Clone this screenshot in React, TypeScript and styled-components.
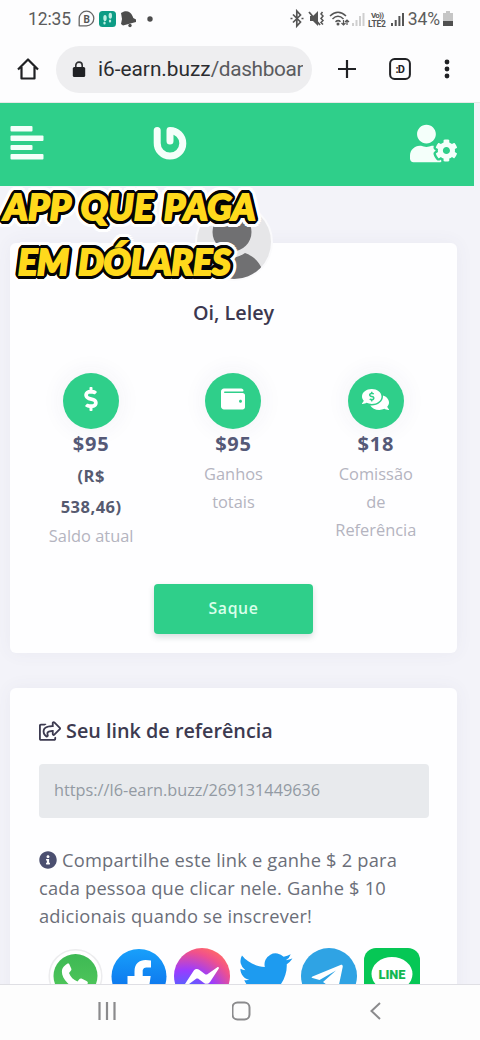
import React from 'react';
import styled, { createGlobalStyle } from 'styled-components';
import { FaCommentsDollar, FaDollarSign, FaInfoCircle, FaRegShareSquare, FaUserCog, FaWallet } from 'react-icons/fa';

const Global = createGlobalStyle`
  * { box-sizing: border-box; }
  body { margin: 0; background: #fff; }
`;

const Phone = styled.div`
  position: relative;
  display: flex;
  flex-direction: column;
  width: 480px;
  height: 1040px;
  overflow: hidden;
  background: #fdfdfe;
  font-family: 'Open Sans', sans-serif;
`;

const StatusBar = styled.div`
  display: flex;
  align-items: center;
  justify-content: space-between;
  height: 36px;
  padding: 1px 27px 0 28px;
  font: 400 17.5px Roboto, sans-serif;
  color: #5c5c5c;
`;

const StatusGroup = styled.div<{ $gap: number }>`
  display: flex;
  align-items: center;
  gap: ${p => p.$gap}px;
`;

const Clock = styled.span`
  letter-spacing: -0.1px;
`;

const Battery = styled.span`
  margin-left: 1px;
  letter-spacing: -0.1px;
`;

const BrowserBar = styled.div`
  display: flex;
  align-items: center;
  height: 67px;
  padding: 0 28px 0 17px;
  border-bottom: 1px solid #e8e8e8;
`;

const AddressPill = styled.div`
  display: flex;
  align-items: center;
  width: 256px;
  height: 47px;
  margin: 0 24px 0 17px;
  padding: 0 9px 0 16px;
  border-radius: 24px;
  background: #eeeef0;
`;

const Address = styled.div`
  flex: 1;
  margin-left: 12px;
  overflow: hidden;
  white-space: nowrap;
  font: 400 20.8px/30px Roboto, sans-serif;
  letter-spacing: -0.35px;
  color: #5a5b5e;
`;

const Host = styled.span`
  letter-spacing: 0;
  color: #2b2c2f;
`;

const BrowserActions = styled.div`
  display: flex;
  flex: 1;
  align-items: center;
  justify-content: space-between;
`;

const Page = styled.main`
  flex: 1;
  min-height: 0;
  overflow: hidden;
  background: #f3f3f9;
`;

const Header = styled.header`
  display: flex;
  align-items: center;
  justify-content: space-between;
  width: 474px;
  height: 83px;
  padding: 0 17px 3px 10px;
  background: #2fcf8a;
`;

const HeaderLogo = styled.div`
  display: flex;
  flex: 1;
  padding-left: 109px;
`;

const Card = styled.section<{ $top: number; $height: number }>`
  display: flex;
  flex-direction: column;
  width: 447px;
  height: ${p => p.$height}px;
  margin: ${p => p.$top}px 0 0 10px;
  border-radius: 6px;
  background: #fefeff;
  box-shadow: 0 0 18px rgba(90, 80, 120, 0.06);
`;

const Avatar = styled.div`
  display: flex;
  align-self: center;
  flex: none;
  width: 78px;
  height: 78px;
  margin-top: -40px;
`;

const Greeting = styled.h1`
  margin: 18px 0 0;
  text-align: center;
  font-size: 19.8px;
  font-weight: 600;
  line-height: 28px;
  color: #3c384f;
`;

const Stats = styled.div`
  display: flex;
  height: 211px;
  margin: 46px 10px 0;
`;

const Stat = styled.div`
  display: flex;
  flex: 1;
  flex-direction: column;
  align-items: center;
  text-align: center;
`;

const StatIcon = styled.div`
  display: flex;
  align-items: center;
  justify-content: center;
  width: 56px;
  height: 56px;
  padding-bottom: 4px;
  border-radius: 50%;
  background: #2fcf8a;
  box-shadow: 0 0 24px rgba(60, 60, 120, 0.07);
  color: #fff;
`;

const Value = styled.strong`
  height: 31px;
  font-size: 20px;
  font-weight: 700;
  line-height: 30px;
  letter-spacing: 0.8px;
  color: #555977;
`;

const Converted = styled.strong`
  width: 70px;
  font-size: 16.5px;
  font-weight: 700;
  line-height: 31px;
  letter-spacing: 0.5px;
  color: #565a70;
`;

const Label = styled.span`
  width: 94px;
  font-size: 16.4px;
  line-height: 28px;
  color: #b4b4c0;
`;

const Withdraw = styled.button`
  align-self: center;
  width: 159px;
  height: 50px;
  border: 0;
  padding: 0 0 2px;
  border-radius: 4px;
  background: #2fcf8a;
  box-shadow: 0 3px 6px rgba(40, 80, 70, 0.18);
  font: 600 15.8px 'Open Sans', sans-serif;
  letter-spacing: 0.6px;
  color: #d9ffea;
`;

const Referral = styled.div`
  display: flex;
  flex-direction: column;
  padding: 29px 28px 0 29px;
`;

const ReferralTitle = styled.h2`
  display: flex;
  align-items: center;
  gap: 5px;
  margin: 0;
  font-size: 19.8px;
  font-weight: 600;
  line-height: 28px;
  white-space: nowrap;
  color: #3c3a50;
`;

const LinkField = styled.div`
  height: 54px;
  margin-top: 19px;
  padding: 0 15px;
  border-radius: 4px;
  background: #e8eaed;
  font-size: 16.3px;
  line-height: 53px;
  color: #939aa3;
`;

const Notice = styled.p`
  margin: 28px 0 0;
  font-size: 18.3px;
  line-height: 28px;
  letter-spacing: 0.2px;
  white-space: nowrap;
  color: #6b6e79;
`;

const InfoMark = styled(FaInfoCircle)`
  margin-right: 5px;
  vertical-align: -2px;
  color: #4b4f70;
`;

const Socials = styled.div`
  display: flex;
  gap: 7.2px;
  margin: 18px 0 0 9px;
`;

const NavBar = styled.nav`
  display: flex;
  align-items: center;
  justify-content: space-between;
  height: 56px;
  padding: 0 98px 3px;
  border-top: 1px solid #dfdfe4;
  background: #fdfdfd;
`;

const Caption = styled.div`
  position: absolute;
  top: 181px;
  left: 0;
  width: 262px;
`;

const ring = (radius: number, color: string) =>
  Array.from({ length: 20 }, (_, i) => {
    const a = (i / 20) * Math.PI * 2;
    return `${(Math.cos(a) * radius).toFixed(2)}px ${(Math.sin(a) * radius).toFixed(2)}px 0 ${color}`;
  }).join(', ');

const CaptionLine = styled.div<{ $indent: number; $spacing: number }>`
  height: 55px;
  margin-left: ${p => p.$indent}px;
  white-space: nowrap;
  font: italic 900 36px/50px Lato, sans-serif;
  letter-spacing: ${p => p.$spacing}px;
  word-spacing: 2px;
  color: #ffd91c;
  -webkit-text-stroke: 2px #ffd91c;
  stroke-linejoin: round;
  text-shadow: ${ring(2, '#050505')}, ${ring(3.8, '#050505')}, ${ring(7, '#fff')};
`;

const StatusIcons = () => (
  <svg width="99" height="20" viewBox="0 0 99 20" fill="none" stroke="#555" strokeWidth="1.500">
    <path d="M4 5.500l7.500 7.500-3.700 4V2l3.700 4L4 13.500M1.500 9.500h2M12.500 9.500h2" strokeWidth="1.700" />
    <path d="M21 7h3l5-5v15l-5-5h-3z" fill="#555" stroke="none" />
    <path d="M20 3l11 13" strokeWidth="1.800" />
    <path d="M33.500 3l-1.500 2 2 2-2 2.500 2 2-2 2 2 2" />
    <path d="M41 7c5-5 11-5 16 0M43.500 10c3.500-3.500 7.500-3.500 11 0M46.500 12.800c2-1.600 3.500-1.600 5 0" />
    <circle cx="49" cy="15" r="1.500" fill="#555" stroke="none" />
    <path d="M54.500 11v5m-2-2l2 2 2-2M58 16v-5m-2 2l2-2 2 2" strokeWidth="1.200" />
    <path d="M64 17v-3M67.500 17v-6M71 17V7M74.500 17V4" stroke="#cfcfcf" strokeWidth="2" />
    <text x="82" y="8.500" fontFamily="Roboto, sans-serif" fontWeight="700" fontSize="8" fill="#555" stroke="none" textLength="13">Vo))</text>
    <text x="79" y="17.500" fontFamily="Roboto, sans-serif" fontWeight="700" fontSize="8.500" fill="#555" stroke="none" textLength="18">LTE2</text>
  </svg>
);

const Signal = () => (
  <svg width="13" height="16" viewBox="0 0 13 16" stroke="#555" strokeWidth="2">
    <path d="M1 15v-3M4.700 15V9M8.400 15V5M12 15V2" />
  </svg>
);

const BatteryIcon = () => (
  <svg width="10" height="15" viewBox="0 0 10 15">
    <path d="M3 0h4v2h3v13H0V2h3z" fill="#c6c6c6" />
    <path d="M0 10h10v5H0z" fill="#505050" />
  </svg>
);

const Notifications = () => (
  <svg width="76" height="18" viewBox="0 0 76 18">
    <path d="M1.200 16.300V8.500a7.300 7.300 0 1 1 7.300 7.300H1.200z" fill="none" stroke="#666" strokeWidth="1.300" />
    <text x="5.400" y="12.500" fontFamily="Roboto, sans-serif" fontWeight="700" fontSize="10" fill="#555">B</text>
    <rect x="21" y="1" width="17" height="16" rx="3.500" fill="#0d9c85" />
    <g fill="#bdeee2">
      <ellipse cx="27" cy="8" rx="1.700" ry="3.100" />
      <ellipse cx="26.500" cy="13" rx="1.200" ry="1.500" />
      <ellipse cx="32.300" cy="5.800" rx="1.700" ry="3" />
      <ellipse cx="32" cy="11" rx="1.200" ry="1.500" />
    </g>
    <g fill="#4d4d4d">
      <path d="M43 3l3-1.500c3.500-1 7 .5 8.500 4.500l.8 2 2.700 1.500v2.500l-13 3.500-2-1.500 1-5z" />
      <circle cx="52" cy="15.500" r="1.700" />
      <circle cx="72" cy="9" r="2.700" />
    </g>
  </svg>
);

const AppLogo = () => (
  <svg width="34" height="34" viewBox="0 0 34 34" fill="none" stroke="#f4fffa" strokeWidth="7" strokeLinecap="round" strokeLinejoin="round">
    <path d="M4.200 4.500V17a12.800 12.800 0 1 0 12.800-12.500V15" />
  </svg>
);

const MenuIcon = () => (
  <svg width="34" height="34" viewBox="0 0 34 34" fill="#f4fffa">
    <rect x="0.500" y="0" width="22" height="5.500" rx="1" />
    <rect x="0.500" y="9.500" width="33" height="5.500" rx="1" />
    <rect x="0.500" y="19" width="22" height="5" rx="1" />
    <rect x="0.500" y="28" width="33" height="5.500" rx="1" />
  </svg>
);

const WhatsApp = () => (
  <svg width="56" height="56" viewBox="0 0 56 56">
    <defs>
      <linearGradient id="wa" x2="0" y2="1"><stop stopColor="#3db954" /><stop offset="1" stopColor="#54c95c" /></linearGradient>
    </defs>
    <circle cx="27.500" cy="28" r="26.300" fill="#fff" stroke="#ececee" strokeWidth="1.500" />
    <circle cx="27.500" cy="28" r="22" fill="url(#wa)" />
    <path d="M18.500 17c-6 4-4 12 2 18 7 7 17 9 20 1 .5-2 .5-2-1-3l-5-2.500c-1-.3-1.500 0-2 .5l-2 2.500c-4-1.500-7-4.500-8.500-8.500l2-2.500c.5-.7.500-1 .2-2l-2-4.500c-.6-1-2.500-.3-3.700 1z" transform="translate(-1 0)" fill="#fff" />
  </svg>
);

const Facebook = () => (
  <svg width="56" height="56" viewBox="0 0 56 56">
    <defs>
      <linearGradient id="fb" x2="0" y2="1"><stop stopColor="#18a0fb" /><stop offset="1" stopColor="#0866e8" /></linearGradient>
    </defs>
    <circle cx="28" cy="28.500" r="27.500" fill="url(#fb)" />
    <path d="M24 56V36h-7v-8h7v-4.500c0-8 5-11.500 11-11.500l5.500.6v7h-3.700c-3.500 0-4.600 1.500-4.600 4V28h8l-1.200 8h-6.800v20z" transform="translate(-.5 0)" fill="#fff" />
  </svg>
);

const Messenger = () => (
  <svg width="56" height="56" viewBox="0 0 56 56">
    <defs>
      <radialGradient id="ms" cx="0.200" cy="1" r="1.100">
        <stop stopColor="#0a8cff" /><stop offset="0.550" stopColor="#9a3cff" /><stop offset="0.850" stopColor="#f0518c" /><stop offset="1" stopColor="#ff6a68" />
      </radialGradient>
    </defs>
    <circle cx="28" cy="28" r="28" fill="url(#ms)" />
    <path d="M11 36l8.500-13c1.500-2.300 4-2.500 6-1l6 4.500 1.500 0 10-7c1.500-1 2.500 0 1.500 1.500L36 34c-1.500 2-4 2.500-6 1l-6-4.500h-1.500L13 37.500c-1.500 1-2.800 0-2-1.500z" fill="#fff" />
  </svg>
);

const Twitter = () => (
  <svg width="56" height="56" viewBox="0 0 56 56">
    <path transform="translate(.3 .3) scale(2.250)" d="M23.950 4.570a10 10 0 0 1-2.820.77 4.960 4.960 0 0 0 2.160-2.720c-.95.55-2 .95-3.130 1.180a4.920 4.920 0 0 0-8.380 4.480C7.690 8.090 4.070 6.130 1.640 3.160a4.920 4.920 0 0 0 1.520 6.570 4.900 4.900 0 0 1-2.230-.61v.06c0 2.380 1.700 4.370 3.950 4.820a5 5 0 0 1-2.210.09 4.940 4.940 0 0 0 4.600 3.420A9.870 9.870 0 0 1 0 19.540a13.990 13.990 0 0 0 7.550 2.210c9.050 0 14-7.500 14-13.980 0-.21 0-.42-.02-.63a9.940 9.940 0 0 0 2.460-2.550z" fill="#1d9bf0" />
  </svg>
);

const Telegram = () => (
  <svg width="56" height="56" viewBox="0 0 56 56">
    <circle cx="28" cy="28" r="28" fill="#2fa3e4" />
    <path d="M11.500 28.500L39.500 17c1.600-.5 2.500.3 2.200 2L37 41.500c-.4 1.600-1.400 2-2.800 1.200L22 34l13-11.500L18.500 32l-7-2c-1.200-.4-1.200-1 0-1.500z" fill="#fff" />
  </svg>
);

const Line = () => (
  <svg width="56" height="56" viewBox="0 0 56 56">
    <rect width="56" height="56" rx="12" fill="#06c755" />
    <ellipse cx="28" cy="26" rx="20.500" ry="17" fill="#fff" />
    <text x="14.500" y="30.500" fontFamily="Roboto, sans-serif" fontSize="13" fontWeight="900" textLength="27" lengthAdjust="spacingAndGlyphs" fill="#13b851">LINE</text>
  </svg>
);

export default function App() {
  return (
    <Phone>
      <Global />
      <StatusBar>
        <StatusGroup $gap={7}>
          <Clock>12:35</Clock>
          <Notifications />
        </StatusGroup>
        <StatusGroup $gap={3}>
          <StatusIcons />
          <Signal />
          <Battery>34%</Battery>
          <BatteryIcon />
        </StatusGroup>
      </StatusBar>
      <BrowserBar>
        <svg width="22" height="22" viewBox="0 0 22 22" fill="none" stroke="#202124" strokeWidth="2.200" strokeLinejoin="round">
          <path d="M1 11.500L11 1.500l10 10M4.500 9v11.500h13V9" />
        </svg>
        <AddressPill>
          <svg width="14" height="17" viewBox="0 0 14 17">
            <path d="M3.800 7V4.300a3.200 3.200 0 0 1 6.400 0V7" fill="none" stroke="#303134" strokeWidth="1.600" />
            <rect x="0.800" y="6" width="12.400" height="10" rx="1.500" fill="#202124" />
          </svg>
          <Address><Host>i6-earn.buzz</Host>/dashboar</Address>
        </AddressPill>
        <BrowserActions>
          <svg width="22" height="20" viewBox="0 0 22 20" stroke="#202124" strokeWidth="2.200">
            <path d="M2 10h18M11 1v18" />
          </svg>
          <svg width="22" height="22" viewBox="0 0 22 22">
            <rect x="1.100" y="1.100" width="19.800" height="19.800" rx="4.500" fill="none" stroke="#202124" strokeWidth="2" />
            <text x="6.500" y="14.800" fontFamily="Roboto, sans-serif" fontSize="11" fontWeight="700" fill="#202124" textLength="9.500">:D</text>
          </svg>
          <svg width="10" height="20" viewBox="0 0 10 20" fill="#202124">
            <circle cx="5" cy="3" r="2.400" /><circle cx="5" cy="10" r="2.400" /><circle cx="5" cy="17" r="2.400" />
          </svg>
        </BrowserActions>
      </BrowserBar>

      <Page>
        <Header>
          <MenuIcon />
          <HeaderLogo><AppLogo /></HeaderLogo>
          <FaUserCog size={47} color="#f4fffa" />
        </Header>

        <Card $top={57} $height={410}>
          <Avatar>
            <svg width="78" height="78" viewBox="0 0 78 78">
              <clipPath id="face"><circle cx="39" cy="39" r="37" /></clipPath>
              <circle cx="39" cy="39" r="39" fill="#fafafc" />
              <circle cx="39" cy="39" r="37" fill="#e6e6e8" />
              <g clipPath="url(#face)" fill="#707072">
                <circle cx="37" cy="29" r="19.500" />
                <path d="M5 70c3-11 10-17 16-19 9 6 20 5 29-1 8 3 14 8 18 18v10H5z" />
              </g>
            </svg>
          </Avatar>
          <Greeting>Oi, Leley</Greeting>
          <Stats>
            <Stat>
              <StatIcon><FaDollarSign size={24} /></StatIcon>
              <Value>$95</Value>
              <Converted>(R$ 538,46)</Converted>
              <Label>Saldo atual</Label>
            </Stat>
            <Stat>
              <StatIcon><FaWallet size={24} /></StatIcon>
              <Value>$95</Value>
              <Label>Ganhos<br />totais</Label>
            </Stat>
            <Stat>
              <StatIcon><FaCommentsDollar size={27} /></StatIcon>
              <Value>$18</Value>
              <Label>Comissão<br />de<br />Referência</Label>
            </Stat>
          </Stats>
          <Withdraw>Saque</Withdraw>
        </Card>

        <Card $top={35} $height={420}>
          <Referral>
            <ReferralTitle><FaRegShareSquare size={22} />Seu link de referência</ReferralTitle>
            <LinkField>https://l6-earn.buzz/269131449636</LinkField>
            <Notice>
              <InfoMark size={18} />Compartilhe este link e ganhe $ 2 para<br />
              cada pessoa que clicar nele. Ganhe $ 10<br />
              adicionais quando se inscrever!
            </Notice>
            <Socials>
              <WhatsApp /><Facebook /><Messenger /><Twitter /><Telegram /><Line />
            </Socials>
          </Referral>
        </Card>
      </Page>

      <NavBar>
        <svg width="18" height="18" viewBox="0 0 18 18" stroke="#8b8b8d" strokeWidth="2.200"><path d="M1.500 0v18M9 0v18M16.500 0v18" /></svg>
        <svg width="20" height="20" viewBox="0 0 20 20"><rect x="0.500" y="1.500" width="17" height="17" rx="5" fill="none" stroke="#8b8b8d" strokeWidth="2" /></svg>
        <svg width="14" height="18" viewBox="0 0 14 18" fill="none" stroke="#8b8b8d" strokeWidth="2"><path d="M12 1L3.500 9l8.500 8" /></svg>
      </NavBar>

      <Caption>
        <CaptionLine $indent={4} $spacing={0.5}>APP QUE PAGA</CaptionLine>
        <CaptionLine $indent={18} $spacing={-0.2}>EM DÓLARES</CaptionLine>
      </Caption>
    </Phone>
  );
}
